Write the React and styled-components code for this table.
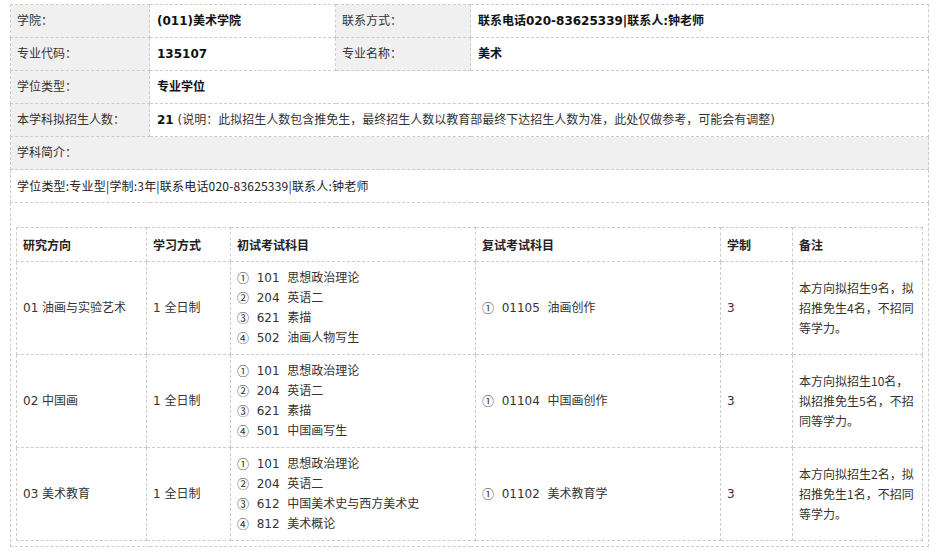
import React from 'react';
import styled, { createGlobalStyle } from 'styled-components';

const GlobalStyle = createGlobalStyle`
  body {
    margin: 0;
    background: #fff;
    font-family: "DejaVu Sans", "Noto Sans CJK SC", sans-serif;
    font-size: 12px;
    color: #333;
  }
`;

const Page = styled.div`
  padding: 4px 0 0 10px;
`;

const InfoTable = styled.table`
  width: 918px;
  table-layout: fixed;
  border-collapse: collapse;
  border: 1px dashed #ccc;
`;

const Cell = styled.td`
  border: 1px dashed #ccc;
  padding: 6px 6px;
  height: 20px;
  line-height: 20px;
  vertical-align: middle;
  text-align: left;
`;

const LabelCell = styled(Cell)`
  background: #f0f0f0;
  color: #333;
`;

const ValueCell = styled(Cell)`
  background: #fff;
  padding-left: 7px;
  font-weight: ${p => (p.$bold ? 'bold' : 'normal')};
  color: ${p => (p.$bold ? '#111' : '#333')};
`;

const Strong = styled.b`
  color: #111;
`;

const IntroCell = styled(Cell)`
  font-family: "Noto Sans CJK SC", sans-serif;
  color: #222;
  letter-spacing: 0.2px;
`;

const PlanCell = styled.td`
  border: 1px dashed #ccc;
  padding: 24px 5px 5px 5px;
`;

const PlanTable = styled.table`
  width: 906px;
  table-layout: fixed;
  border-collapse: collapse;
  border: 1px dashed #ccc;
`;

const HeadCell = styled.th`
  border: 1px dashed #ccc;
  padding: 7px 6px 6px;
  height: 20px;
  line-height: 20px;
  text-align: left;
  font-weight: bold;
  color: #222;
  font-family: "Noto Sans CJK SC", sans-serif;
`;

const BodyCell = styled.td`
  border: 1px dashed #ccc;
  padding: 6px 6px;
  line-height: 20px;
  vertical-align: middle;
  color: #333;
  font-family: ${p => (p.$cjk ? '"Noto Sans CJK SC", sans-serif' : 'inherit')};
`;

const SubjectLine = styled.div`
  height: 20px;
  line-height: 20px;
  white-space: nowrap;
  overflow: visible;
`;

const Mark = styled.span`
  display: inline-block;
  height: 20px;
  line-height: 20px;
  vertical-align: top;
  font-family: "Noto Sans CJK SC", sans-serif;
`;

const plan = [
  {
    dir: '01 油画与实验艺术',
    first: [
      ['①', '101', '思想政治理论'],
      ['②', '204', '英语二'],
      ['③', '621', '素描'],
      ['④', '502', '油画人物写生'],
    ],
    second: ['①', '01105', '油画创作'],
    note: '本方向拟招生9名，拟招推免生4名，不招同等学力。',
  },
  {
    dir: '02 中国画',
    first: [
      ['①', '101', '思想政治理论'],
      ['②', '204', '英语二'],
      ['③', '621', '素描'],
      ['④', '501', '中国画写生'],
    ],
    second: ['①', '01104', '中国画创作'],
    note: '本方向拟招生10名，拟招推免生5名，不招同等学力。',
  },
  {
    dir: '03 美术教育',
    first: [
      ['①', '101', '思想政治理论'],
      ['②', '204', '英语二'],
      ['③', '612', '中国美术史与西方美术史'],
      ['④', '812', '美术概论'],
    ],
    second: ['①', '01102', '美术教育学'],
    note: '本方向拟招生2名，拟招推免生1名，不招同等学力。',
  },
];

function Subject({ item }) {
  const [mark, code, name] = item;
  return (
    <SubjectLine>
      <Mark>{mark}</Mark>{'\u00a0\u00a0'}{code}{'\u00a0\u00a0'}{name}
    </SubjectLine>
  );
}

export default function App() {
  return (
    <Page>
      <GlobalStyle />
      <InfoTable>
        <colgroup>
          <col style={{ width: 139 }} />
          <col style={{ width: 186 }} />
          <col style={{ width: 135 }} />
          <col style={{ width: 458 }} />
        </colgroup>
        <tbody>
          <tr>
            <LabelCell>学院：</LabelCell>
            <ValueCell $bold>(011)美术学院</ValueCell>
            <LabelCell>联系方式：</LabelCell>
            <ValueCell $bold>联系电话020-83625339|联系人:钟老师</ValueCell>
          </tr>
          <tr>
            <LabelCell>专业代码：</LabelCell>
            <ValueCell $bold>135107</ValueCell>
            <LabelCell>专业名称：</LabelCell>
            <ValueCell $bold>美术</ValueCell>
          </tr>
          <tr>
            <LabelCell>学位类型：</LabelCell>
            <ValueCell $bold colSpan={3}>专业学位</ValueCell>
          </tr>
          <tr>
            <LabelCell>本学科拟招生人数：</LabelCell>
            <ValueCell colSpan={3}>
              <Strong>21</Strong> (说明：此拟招生人数包含推免生，最终招生人数以教育部最终下达招生人数为准，此处仅做参考，可能会有调整)
            </ValueCell>
          </tr>
          <tr>
            <LabelCell colSpan={4}>学科简介：</LabelCell>
          </tr>
          <tr>
            <IntroCell colSpan={4}>学位类型:专业型|学制:3年|联系电话020-83625339|联系人:钟老师</IntroCell>
          </tr>
          <tr>
            <PlanCell colSpan={4}>
              <PlanTable>
                <colgroup>
                  <col style={{ width: 130 }} />
                  <col style={{ width: 84 }} />
                  <col style={{ width: 245 }} />
                  <col style={{ width: 245 }} />
                  <col style={{ width: 72 }} />
                  <col style={{ width: 130 }} />
                </colgroup>
                <thead>
                  <tr>
                    <HeadCell>研究方向</HeadCell>
                    <HeadCell>学习方式</HeadCell>
                    <HeadCell>初试考试科目</HeadCell>
                    <HeadCell>复试考试科目</HeadCell>
                    <HeadCell>学制</HeadCell>
                    <HeadCell>备注</HeadCell>
                  </tr>
                </thead>
                <tbody>
                  {plan.map(row => (
                    <tr key={row.dir}>
                      <BodyCell>{row.dir}</BodyCell>
                      <BodyCell>1 全日制</BodyCell>
                      <BodyCell>
                        {row.first.map(item => (
                          <Subject key={item[1]} item={item} />
                        ))}
                      </BodyCell>
                      <BodyCell>
                        <Subject item={row.second} />
                      </BodyCell>
                      <BodyCell>3</BodyCell>
                      <BodyCell $cjk>{row.note}</BodyCell>
                    </tr>
                  ))}
                </tbody>
              </PlanTable>
            </PlanCell>
          </tr>
        </tbody>
      </InfoTable>
    </Page>
  );
}
